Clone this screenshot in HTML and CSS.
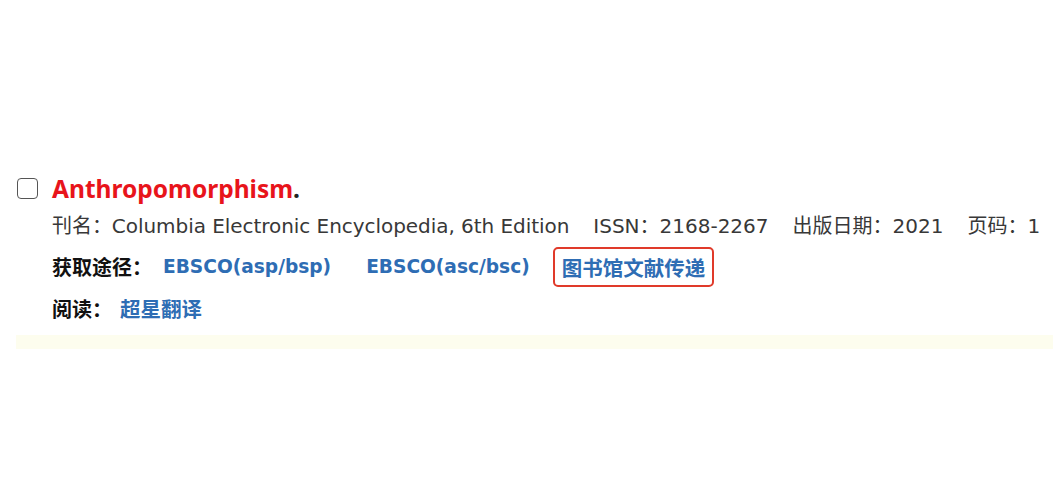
FILE: index.html
```html
<!DOCTYPE html>
<html lang="zh">
<head>
<meta charset="utf-8">
<link rel="stylesheet" href="styles.css">
</head>
<body>
<div class="page">
  <div class="record">
    <div class="title-row">
      <span class="checkbox"></span>
      <h3 class="title"><span class="hl">Anthropomorphism</span>.</h3>
    </div>
    <div class="body">
      <div class="info">
        <span>刊名：Columbia Electronic Encyclopedia, 6th Edition</span>
        <span>ISSN：2168-2267</span>
        <span>出版日期：2021</span>
        <span>页码：1</span>
      </div>
      <div class="links">
        <span class="label">获取途径：</span>
        <a class="link latin">EBSCO(asp/bsp)</a>
        <a class="link latin second">EBSCO(asc/bsc)</a>
        <a class="link boxed">图书馆文献传递</a>
      </div>
      <div class="links read">
        <span class="label">阅读：</span>
        <a class="link">超星翻译</a>
      </div>
    </div>
  </div>
</div>
</body>
</html>
```
FILE: styles.css
```css
html, body {
  margin: 0;
  padding: 0;
  background: #fff;
}
body {
  font-family: "DejaVu Sans", "Noto Sans CJK SC", sans-serif;
  color: #333;
  overflow: hidden;
  width: 1053px;
  height: 500px;
}
.page {
  padding-top: 172px;
}
.record {
  margin-left: 16px;
  padding-bottom: 22px;
  background: linear-gradient(to bottom, #fff 0, #fff calc(100% - 14px), #fdfdee calc(100% - 14px), #fdfdee 100%);
}
.title-row {
  display: flex;
  align-items: center;
  height: 32px;
}
.checkbox {
  border: 1.5px solid #555;
  border-radius: 4px;
  margin-left: 1px;
  margin-right: 14px;
  box-sizing: border-box;
  width: 21px;
  height: 21px;
}
.title {
  margin: 0;
  font-family: "Noto Sans", "Noto Sans CJK SC", sans-serif;
  font-size: 24.5px;
  font-weight: 700;
  color: #222;
}
.hl {
  color: #e8141b;
}
.body {
  padding-left: 36px;
}
.info {
  display: flex;
  gap: 24px;
  font-size: 20px;
  color: #383838;
  height: 40px;
  align-items: center;
  white-space: nowrap;
}
.info span:first-child {
  letter-spacing: -0.05px;
}
.links {
  display: flex;
  align-items: center;
  height: 45px;
  font-size: 20px;
  font-weight: 700;
  white-space: nowrap;
}
.label {
  color: #111;
  margin-right: 11px;
}
.link {
  color: #2e6db4;
}
.latin {
  font-size: 18.6px;
}
.second {
  margin-left: 35px;
  margin-right: 23px;
}
.boxed {
  border: 2px solid #e03a2a;
  border-radius: 5px;
  padding: 3px 7px;
  font-size: 20.5px;
}
.read .label {
  margin-right: 8px;
}
.read .link {
  font-size: 20.5px;
}
.read {
  height: 38px;
}
```
